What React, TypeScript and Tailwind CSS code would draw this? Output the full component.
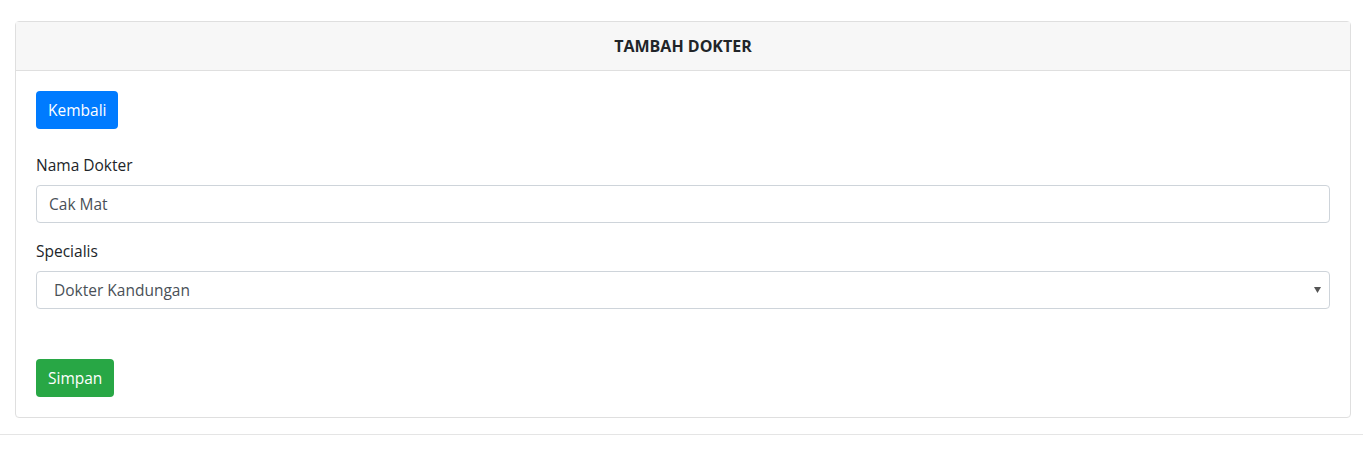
export default function App() {
  return (
    <div className="min-h-[456px] bg-white pt-[21px] text-[#212529] text-[15.5px] leading-6 font-['Open_Sans',sans-serif]">
      <div className="ml-[15px] mr-[12px] rounded border border-[#dfdfdf]">
        <div className="flex h-[49px] items-center justify-center border-b border-[#dfdfdf] bg-[#f7f7f7] text-[16px] font-bold">
          TAMBAH DOKTER
        </div>
        <div className="px-5 pt-5 pb-5">
          <button className="h-[38px] rounded bg-[#007bff] px-3 text-white">
            Kembali
          </button>
          <div className="mt-[24px]">
            <label className="mb-2 block">Nama Dokter</label>
            <input
              className="block h-[38px] w-full rounded border border-[#ced4da] px-3 text-[#495057] outline-none"
              defaultValue="Cak Mat"
            />
          </div>
          <div className="mt-4">
            <label className="mb-2 block">Specialis</label>
            <div className="relative flex h-[38px] w-full items-center rounded border border-[#ced4da] pl-[17px] text-[#495057]">
              Dokter Kandungan
              <svg
                className="absolute right-[8px] top-[15px]"
                width="7"
                height="6"
                viewBox="0 0 7 6"
              >
                <path d="M0 0h7L3.5 6z" fill="#555" />
              </svg>
            </div>
          </div>
          <button className="mt-[50px] h-[38px] rounded bg-[#28a745] px-3 text-white">
            Simpan
          </button>
        </div>
      </div>
      <hr className="mt-[16px] border-t border-[#e5e5e5]" />
    </div>
  );
}
